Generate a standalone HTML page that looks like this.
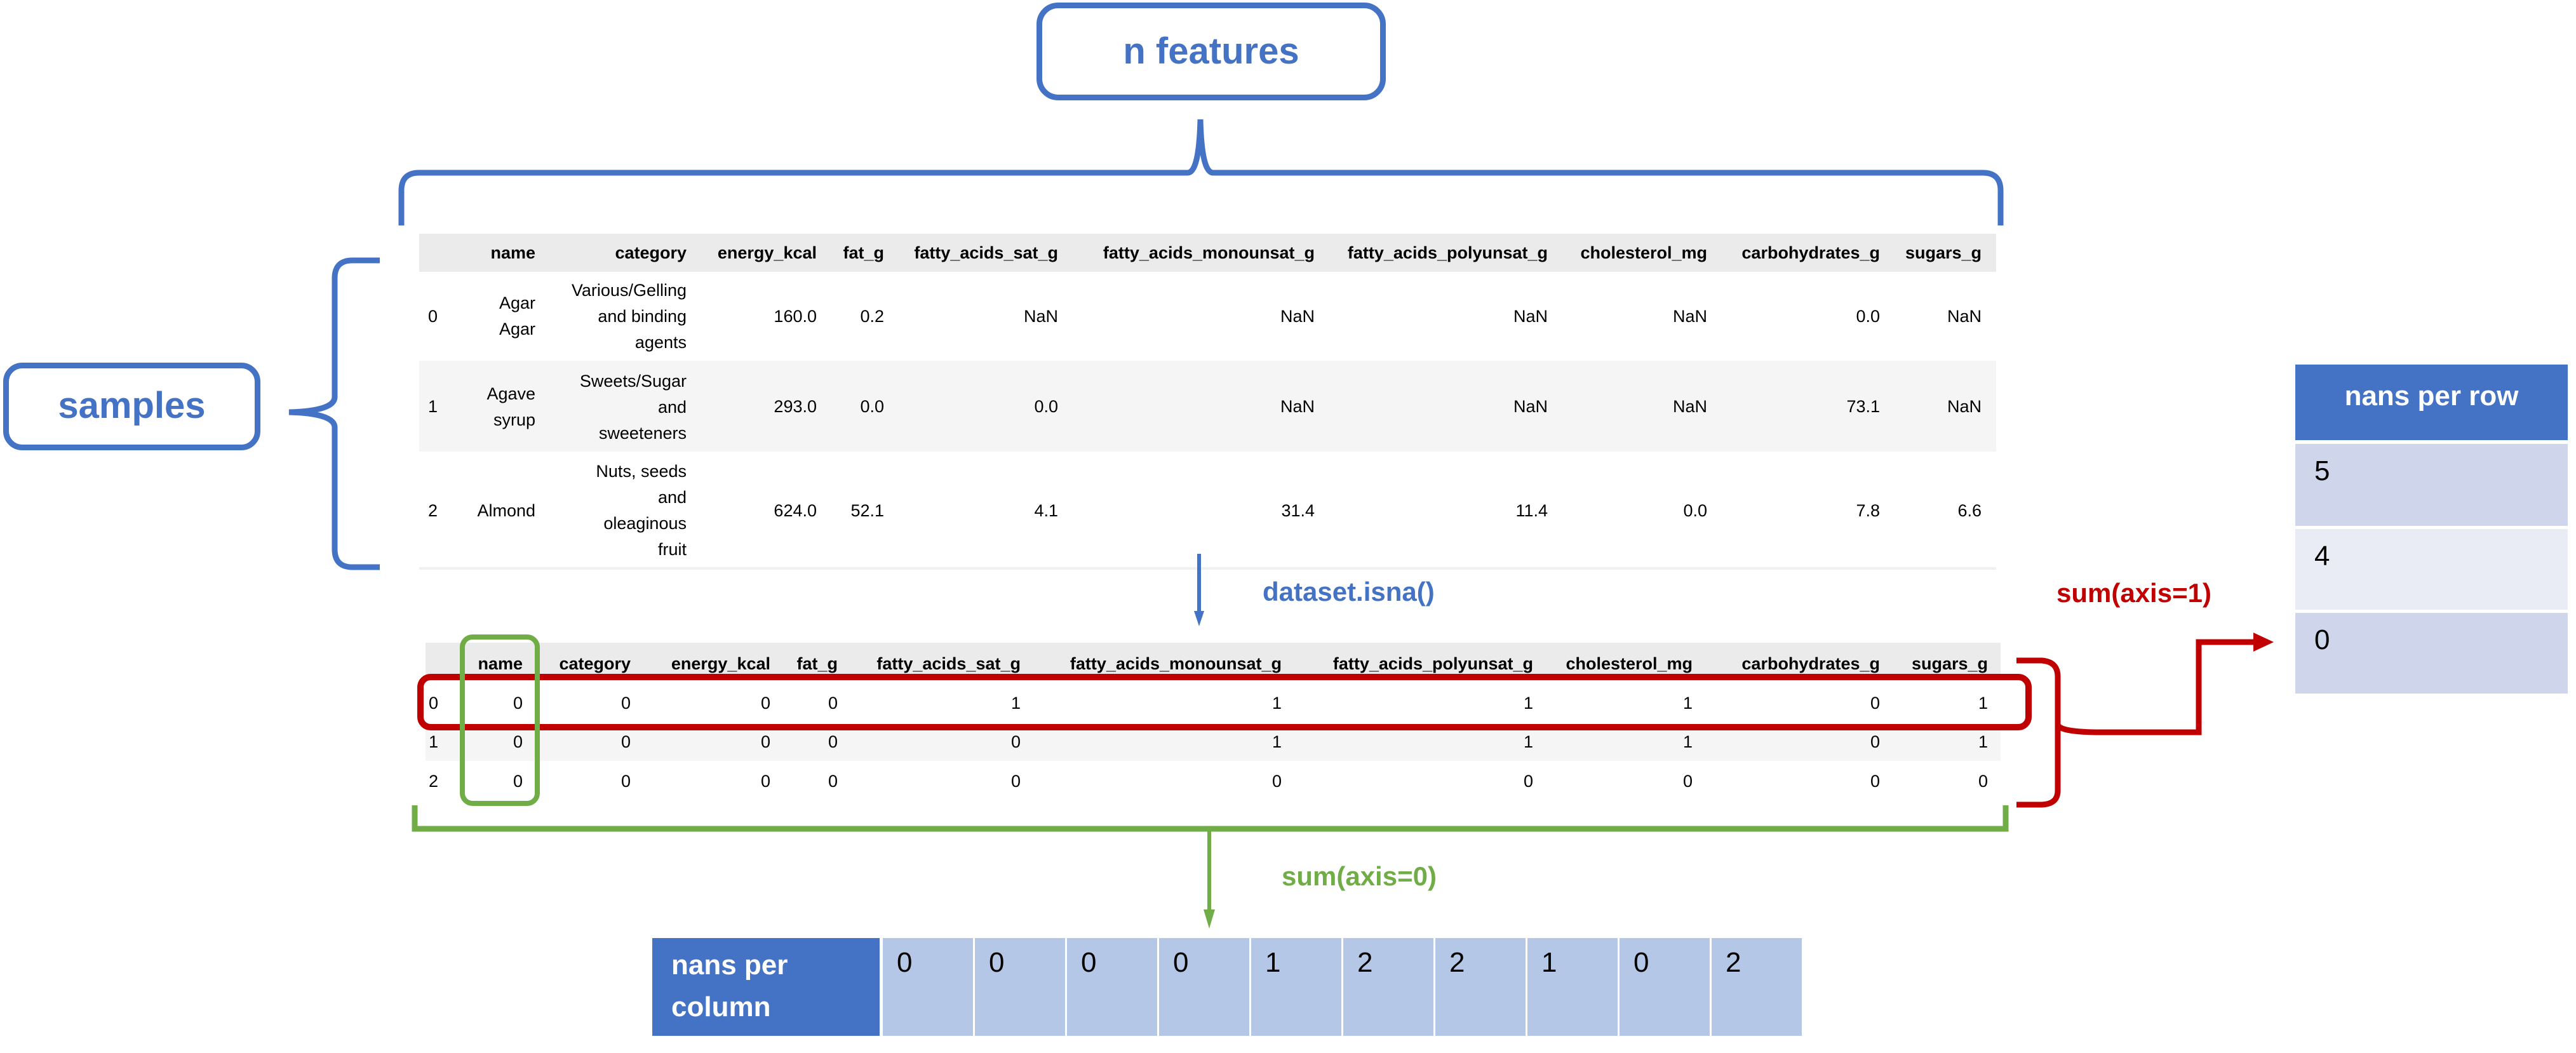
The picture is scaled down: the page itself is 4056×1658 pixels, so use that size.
<!DOCTYPE html>
<html><head><meta charset="utf-8"><style>
*{margin:0;padding:0;box-sizing:border-box}
body{width:4056px;height:1658px;background:#fff;position:relative;overflow:hidden;font-family:"Liberation Sans",sans-serif;color:#000}
.a{position:absolute;white-space:nowrap}
.r{position:absolute;text-align:right;white-space:nowrap}
.t1{font-size:27px;line-height:41px}
.h{font-weight:bold}
.bl{color:#4472C4;font-weight:bold}
</style></head><body>

<!-- table 1 backgrounds -->
<div class="a" style="left:660px;top:368px;width:2483px;height:60px;background:#ebebeb"></div>
<div class="a" style="left:660px;top:568px;width:2483px;height:143px;background:#f5f5f5"></div>
<div class="a" style="left:660px;top:893px;width:2483px;height:4px;background:#f0f0f0"></div>

<!-- table 2 backgrounds -->
<div class="a" style="left:670px;top:1012px;width:2480px;height:52px;background:#ebebeb"></div>
<div class="a" style="left:670px;top:1146px;width:2480px;height:52px;background:#f5f5f5"></div>

<!-- table 1 header -->
<div class="t1 h">
<span class="r" style="right:3213px;top:378px">name</span>
<span class="r" style="right:2975px;top:378px">category</span>
<span class="r" style="right:2770px;top:378px">energy_kcal</span>
<span class="r" style="right:2664px;top:378px">fat_g</span>
<span class="r" style="right:2390px;top:378px">fatty_acids_sat_g</span>
<span class="r" style="right:1986px;top:378px">fatty_acids_monounsat_g</span>
<span class="r" style="right:1619px;top:378px">fatty_acids_polyunsat_g</span>
<span class="r" style="right:1368px;top:378px">cholesterol_mg</span>
<span class="r" style="right:1096px;top:378px">carbohydrates_g</span>
<span class="r" style="right:936px;top:378px">sugars_g</span>
</div>
<!-- table 1 body -->
<div class="t1">
<span class="a" style="left:674px;top:478px">0</span>
<span class="r" style="right:3213px;top:457px">Agar<br>Agar</span>
<span class="r" style="right:2975px;top:437px">Various/Gelling<br>and binding<br>agents</span>
<span class="r" style="right:2770px;top:478px">160.0</span>
<span class="r" style="right:2664px;top:478px">0.2</span>
<span class="r" style="right:2390px;top:478px">NaN</span>
<span class="r" style="right:1986px;top:478px">NaN</span>
<span class="r" style="right:1619px;top:478px">NaN</span>
<span class="r" style="right:1368px;top:478px">NaN</span>
<span class="r" style="right:1096px;top:478px">0.0</span>
<span class="r" style="right:936px;top:478px">NaN</span>

<span class="a" style="left:674px;top:620px">1</span>
<span class="r" style="right:3213px;top:600px">Agave<br>syrup</span>
<span class="r" style="right:2975px;top:580px">Sweets/Sugar<br>and<br>sweeteners</span>
<span class="r" style="right:2770px;top:620px">293.0</span>
<span class="r" style="right:2664px;top:620px">0.0</span>
<span class="r" style="right:2390px;top:620px">0.0</span>
<span class="r" style="right:1986px;top:620px">NaN</span>
<span class="r" style="right:1619px;top:620px">NaN</span>
<span class="r" style="right:1368px;top:620px">NaN</span>
<span class="r" style="right:1096px;top:620px">73.1</span>
<span class="r" style="right:936px;top:620px">NaN</span>

<span class="a" style="left:674px;top:784px">2</span>
<span class="r" style="right:3213px;top:784px">Almond</span>
<span class="r" style="right:2975px;top:722px">Nuts, seeds<br>and<br>oleaginous<br>fruit</span>
<span class="r" style="right:2770px;top:784px">624.0</span>
<span class="r" style="right:2664px;top:784px">52.1</span>
<span class="r" style="right:2390px;top:784px">4.1</span>
<span class="r" style="right:1986px;top:784px">31.4</span>
<span class="r" style="right:1619px;top:784px">11.4</span>
<span class="r" style="right:1368px;top:784px">0.0</span>
<span class="r" style="right:1096px;top:784px">7.8</span>
<span class="r" style="right:936px;top:784px">6.6</span>
</div>

<!-- table 2 -->
<div class="t1 h">
<span class="r" style="right:3233px;top:1025px">name</span>
<span class="r" style="right:3063px;top:1025px">category</span>
<span class="r" style="right:2843px;top:1025px">energy_kcal</span>
<span class="r" style="right:2737px;top:1025px">fat_g</span>
<span class="r" style="right:2449px;top:1025px">fatty_acids_sat_g</span>
<span class="r" style="right:2038px;top:1025px">fatty_acids_monounsat_g</span>
<span class="r" style="right:1642px;top:1025px">fatty_acids_polyunsat_g</span>
<span class="r" style="right:1391px;top:1025px">cholesterol_mg</span>
<span class="r" style="right:1096px;top:1025px">carbohydrates_g</span>
<span class="r" style="right:926px;top:1025px">sugars_g</span>
</div>
<div class="t1">
<span class="a" style="left:675px;top:1087px">0</span>
<span class="r" style="right:3233px;top:1087px">0</span><span class="r" style="right:3063px;top:1087px">0</span><span class="r" style="right:2843px;top:1087px">0</span><span class="r" style="right:2737px;top:1087px">0</span><span class="r" style="right:2449px;top:1087px">1</span><span class="r" style="right:2038px;top:1087px">1</span><span class="r" style="right:1642px;top:1087px">1</span><span class="r" style="right:1391px;top:1087px">1</span><span class="r" style="right:1096px;top:1087px">0</span><span class="r" style="right:926px;top:1087px">1</span>
<span class="a" style="left:675px;top:1148px">1</span>
<span class="r" style="right:3233px;top:1148px">0</span><span class="r" style="right:3063px;top:1148px">0</span><span class="r" style="right:2843px;top:1148px">0</span><span class="r" style="right:2737px;top:1148px">0</span><span class="r" style="right:2449px;top:1148px">0</span><span class="r" style="right:2038px;top:1148px">1</span><span class="r" style="right:1642px;top:1148px">1</span><span class="r" style="right:1391px;top:1148px">1</span><span class="r" style="right:1096px;top:1148px">0</span><span class="r" style="right:926px;top:1148px">1</span>
<span class="a" style="left:675px;top:1210px">2</span>
<span class="r" style="right:3233px;top:1210px">0</span><span class="r" style="right:3063px;top:1210px">0</span><span class="r" style="right:2843px;top:1210px">0</span><span class="r" style="right:2737px;top:1210px">0</span><span class="r" style="right:2449px;top:1210px">0</span><span class="r" style="right:2038px;top:1210px">0</span><span class="r" style="right:1642px;top:1210px">0</span><span class="r" style="right:1391px;top:1210px">0</span><span class="r" style="right:1096px;top:1210px">0</span><span class="r" style="right:926px;top:1210px">0</span>
</div>

<!-- labels / boxes -->
<div class="a bl" style="left:1632px;top:4px;width:550px;height:154px;border:9px solid #4472C4;border-radius:34px;font-size:58px;line-height:136px;text-align:center">n features</div>
<div class="a bl" style="left:5px;top:571px;width:405px;height:138px;border:9px solid #4472C4;border-radius:30px;font-size:58px;line-height:118px;text-align:center">samples</div>
<div class="a bl" style="left:1988px;top:908px;font-size:42px">dataset.isna()</div>
<div class="a" style="left:3238px;top:910px;font-size:42px;font-weight:bold;color:#C00000">sum(axis=1)</div>
<div class="a" style="left:2018px;top:1356px;font-size:42px;font-weight:bold;color:#70AD47">sum(axis=0)</div>

<!-- nans per row -->
<div class="a" style="left:3614px;top:574px;width:429px;height:119px;background:#4472C4;color:#fff;font-weight:bold;font-size:44px;text-align:center;line-height:100px">nans per row</div>
<div class="a" style="left:3614px;top:699px;width:429px;height:129px;background:#CFD5EA;font-size:44px;padding:18px 0 0 30px">5</div>
<div class="a" style="left:3614px;top:833px;width:429px;height:127px;background:#E9EBF5;font-size:44px;padding:18px 0 0 30px">4</div>
<div class="a" style="left:3614px;top:965px;width:429px;height:127px;background:#CFD5EA;font-size:44px;padding:18px 0 0 30px">0</div>

<!-- nans per column -->
<div class="a" style="left:1027px;top:1477px;width:358px;height:154px;background:#4472C4;color:#fff;font-weight:bold;font-size:44px;line-height:66px;padding:10px 0 0 30px">nans per<br>column</div>
<div class="a" style="left:1390px;top:1477px;font-size:44px">
<div style="display:flex;gap:3px">
<div style="width:142px;height:154px;background:#B4C7E7;padding:14px 0 0 22px">0</div>
<div style="width:142px;height:154px;background:#B4C7E7;padding:14px 0 0 22px">0</div>
<div style="width:142px;height:154px;background:#B4C7E7;padding:14px 0 0 22px">0</div>
<div style="width:142px;height:154px;background:#B4C7E7;padding:14px 0 0 22px">0</div>
<div style="width:142px;height:154px;background:#B4C7E7;padding:14px 0 0 22px">1</div>
<div style="width:142px;height:154px;background:#B4C7E7;padding:14px 0 0 22px">2</div>
<div style="width:142px;height:154px;background:#B4C7E7;padding:14px 0 0 22px">2</div>
<div style="width:142px;height:154px;background:#B4C7E7;padding:14px 0 0 22px">1</div>
<div style="width:142px;height:154px;background:#B4C7E7;padding:14px 0 0 22px">0</div>
<div style="width:142px;height:154px;background:#B4C7E7;padding:14px 0 0 22px">2</div>
</div></div>

<svg class="a" style="left:0;top:0" width="4056" height="1658" viewBox="0 0 4056 1658" fill="none">
<!-- top brace -->
<path d="M632 355 L632 300 Q632 272 660 272 L1870 272 Q1888 272 1890 188 Q1892 272 1910 272 L3122 272 Q3150 272 3150 300 L3150 355" stroke="#4472C4" stroke-width="9"/>
<!-- left brace -->
<path d="M598 410 L555 410 Q527 410 527 438 L527 625 Q527 647 455 649 Q527 651 527 673 L527 865 Q527 893 555 893 L598 893" stroke="#4472C4" stroke-width="9"/>
<!-- blue arrow -->
<path d="M1888 872 L1888 965" stroke="#4472C4" stroke-width="6"/>
<path d="M1880 962 L1896 962 L1888 986 Z" fill="#4472C4"/>
<!-- red rect -->
<rect x="662" y="1066" width="2532" height="79" rx="16" stroke="#C00000" stroke-width="10"/>
<!-- green rect -->
<rect x="728" y="1003" width="118" height="262" rx="16" stroke="#70AD47" stroke-width="8"/>
<!-- red brace + arrow -->
<path d="M3175 1040 L3215 1040 Q3240 1042 3240 1065 L3240 1140 Q3240 1152 3300 1153 L3462 1153 L3462 1011 L3555 1011" stroke="#C00000" stroke-width="9"/>
<path d="M3240 1140 L3240 1245 Q3240 1266 3215 1267 L3175 1267" stroke="#C00000" stroke-width="9"/>
<path d="M3548 996 L3580 1011 L3548 1026 Z" fill="#C00000"/>
<!-- green bracket + arrow -->
<path d="M653 1268 L653 1305 L3158 1305 L3158 1268" stroke="#70AD47" stroke-width="9"/>
<path d="M1904 1305 L1904 1440" stroke="#70AD47" stroke-width="6"/>
<path d="M1895 1432 L1913 1432 L1904 1462 Z" fill="#70AD47"/>
</svg>
</body></html>
